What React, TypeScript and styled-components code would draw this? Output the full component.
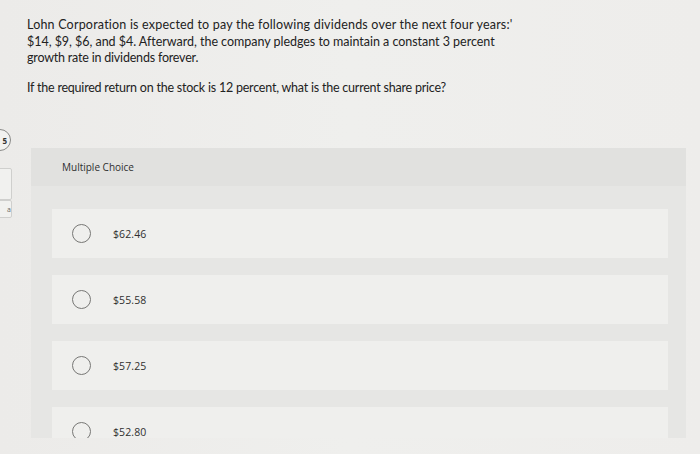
import styled, { createGlobalStyle } from "styled-components";

const GlobalStyle = createGlobalStyle`
  html, body {
    margin: 0;
    padding: 0;
    background: #eeeeec;
  }
  body {
    font-family: "Open Sans", "Liberation Sans", Arial, sans-serif;
    color: #2b2b2b;
  }
`;

const Page = styled.div`
  width: 700px;
  height: 454px;
  overflow: hidden;
  display: flex;
  background: linear-gradient(90deg, #ecebe9 0%, #efefed 50%, #eeedeb 100%);
`;

const Sidebar = styled.div`
  width: 12px;
  flex-shrink: 0;
  overflow: hidden;
  padding-top: 129px;
  display: flex;
  flex-direction: column;
`;

const Badge = styled.div`
  width: 22px;
  height: 22px;
  margin-left: -11px;
  border: 1px solid #8a8a88;
  border-radius: 50%;
  display: flex;
  align-items: center;
  justify-content: flex-end;
  padding-right: 3px;
  box-sizing: border-box;
  font-size: 8px;
  font-weight: 700;
  color: #333;
  background: #f2f2f0;
`;

const SideTab = styled.div<{ h: number }>`
  width: 20px;
  height: ${(p) => p.h}px;
  margin-left: -10px;
  margin-top: ${(p) => (p.h > 20 ? 17 : 0)}px;
  border: 1px solid #cfcfcd;
  border-radius: 2px;
  background: #f1f1ef;
  font-size: 7px;
  color: #666;
  display: flex;
  align-items: center;
  justify-content: flex-end;
`;

const Main = styled.div`
  flex: 1;
  display: flex;
  flex-direction: column;
`;

const Question = styled.div`
  padding: 17px 0 0 15px;
  font-family: Lato, "Open Sans", sans-serif;
  font-size: 12.5px;
  line-height: 16.5px;
  color: #222;
  white-space: nowrap;
`;

const Para = styled.p`
  margin: 0 0 13px 0;
`;

const Line = styled.span<{ spacing: number }>`
  display: block;
  letter-spacing: ${(p) => p.spacing}px;
`;

const Panel = styled.div`
  margin: 39px 14px 0 19px;
  background: #e6e6e4;
  height: 290px;
  overflow: hidden;
  display: flex;
  flex-direction: column;
`;

const PanelHeader = styled.div`
  height: 38px;
  flex-shrink: 0;
  background: #e1e1df;
  display: flex;
  align-items: center;
  padding-left: 31px;
  font-size: 10px;
  color: #2f2f2f;
`;

const Options = styled.div`
  display: flex;
  flex-direction: column;
  gap: 17px;
  padding: 23px 18px 0 21px;
`;

const Option = styled.div`
  height: 49px;
  flex-shrink: 0;
  background: #efefed;
  display: flex;
  align-items: center;
  padding-left: 20px;
  gap: 22px;
`;

const Radio = styled.span`
  width: 19px;
  height: 19px;
  border-radius: 50%;
  border: 1.3px solid #777775;
  box-sizing: border-box;
  flex-shrink: 0;
`;

const Label = styled.span`
  font-size: 10.5px;
  color: #2f2f2f;
  letter-spacing: 0.1px;
`;

const choices = ["$62.46", "$55.58", "$57.25", "$52.80"];

export default function App() {
  return (
    <>
      <GlobalStyle />
      <Page>
        <Sidebar>
          <Badge>5</Badge>
          <SideTab h={30} />
          <SideTab h={16}>a</SideTab>
        </Sidebar>
        <Main>
          <Question>
            <Para>
              <Line spacing={0.2}>
                Lohn Corporation is expected to pay the following dividends over the next four years:'
              </Line>
              <Line spacing={-0.03}>
                $14, $9, $6, and $4. Afterward, the company pledges to maintain a constant 3 percent
              </Line>
              <Line spacing={-0.2}>growth rate in dividends forever.</Line>
            </Para>
            <Para>
              <Line spacing={-0.22}>
                If the required return on the stock is 12 percent, what is the current share price?
              </Line>
            </Para>
          </Question>
          <Panel>
            <PanelHeader>Multiple Choice</PanelHeader>
            <Options>
              {choices.map((c) => (
                <Option key={c}>
                  <Radio />
                  <Label>{c}</Label>
                </Option>
              ))}
            </Options>
          </Panel>
        </Main>
      </Page>
    </>
  );
}
